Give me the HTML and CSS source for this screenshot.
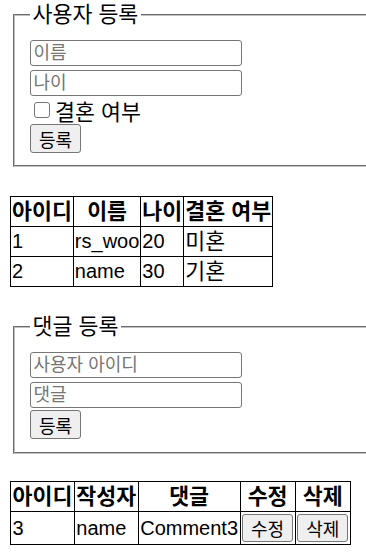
FILE: index.html
```html
<!DOCTYPE html>
<html lang="ko">
<head>
    <meta charset="UTF-8">
    <meta name="viewport" content="width=device-width, initial-scale=1.0">
    <title>시퀄라이즈 서버</title>
    <link rel="stylesheet" href="styles.css">
</head>
<body>
    <!-- 사용자 등록 -->
    <fieldset class="panel">
        <legend>사용자 등록</legend>
        <form id="user-form" class="panel-form">
            <input type="text" id="username" class="field" placeholder="이름">
            <input type="number" id="age" class="field" placeholder="나이">
            <label class="check-row"><input type="checkbox" id="married" class="check">결혼 여부</label>
            <button type="submit" class="btn">등록</button>
        </form>
    </fieldset>

    <table id="user-list" class="list">
        <thead>
            <tr>
                <th>아이디</th>
                <th>이름</th>
                <th>나이</th>
                <th>결혼 여부</th>
            </tr>
        </thead>
        <tbody>
            <tr>
                <td>1</td>
                <td>rs_woo</td>
                <td>20</td>
                <td class="married">미혼</td>
            </tr>
            <tr>
                <td>2</td>
                <td>name</td>
                <td>30</td>
                <td class="married">기혼</td>
            </tr>
        </tbody>
    </table>

    <!-- 댓글 등록 -->
    <fieldset class="panel comment-panel">
        <legend>댓글 등록</legend>
        <form id="comment-form" class="panel-form">
            <input type="text" id="userid" class="field" placeholder="사용자 아이디">
            <input type="text" id="comment" class="field" placeholder="댓글">
            <button type="submit" class="btn">등록</button>
        </form>
    </fieldset>

    <table id="comment-list" class="list comment-list">
        <thead>
            <tr>
                <th>아이디</th>
                <th>작성자</th>
                <th>댓글</th>
                <th>수정</th>
                <th>삭제</th>
            </tr>
        </thead>
        <tbody>
            <tr>
                <td>3</td>
                <td>name</td>
                <td>Comment3</td>
                <td><button type="button" class="btn">수정</button></td>
                <td><button type="button" class="btn">삭제</button></td>
            </tr>
        </tbody>
    </table>
</body>
</html>
```

FILE: styles.css
```css
/* Global Styles */
html {
    overflow-x: hidden;
}

body {
    font-family: "Liberation Sans", "Noto Sans CJK KR", sans-serif;
    font-size: 21.7px; /* hangul runs at ~20px per glyph */
    margin: 2px 0 10px 10px;
    color: #000;
    background-color: #fff;
}

/* Fieldsets */
.panel {
    margin: 0 0 0 3px;
    padding: 0 15px 12px;
    border: 2px groove #c0c0c0;
    border-right: none;
}

.panel legend {
    padding: 0 2.5px;
    line-height: 26px;
}

.panel-form {
    display: flex;
    flex-direction: column;
    align-items: flex-start;
    padding-top: 12px;
}

.field {
    box-sizing: border-box;
    width: 212px;
    height: 26px;
    margin: 0 0 4px;
    padding: 1px 2.5px;
    border: 1px solid #767676;
    border-radius: 3px;
    font-family: inherit;
    font-size: 18px;
    outline: none;
}

.field::placeholder {
    color: #757575;
}

.check-row {
    display: flex;
    align-items: center;
    height: 28px;
    margin-top: -4px;
}

.check {
    appearance: none;
    box-sizing: border-box;
    width: 16px;
    height: 16px;
    margin: 0 5px 0 4px;
    border: 1px solid #767676;
    border-radius: 3px;
    background-color: #fff;
}

.btn {
    box-sizing: border-box;
    height: 29px;
    padding: 0 8px;
    border: 1px solid #767676;
    border-radius: 3px;
    background-color: #efefef;
    color: #000;
    font-family: inherit;
    font-size: 18px;
}

.comment-panel {
    margin-top: 27px;
    padding-bottom: 13px;
}

.comment-panel .btn {
    margin-top: -2px;
}

/* Tables */
.list {
    border-collapse: collapse;
    margin-top: 29px;
}

.list th,
.list td {
    border: 1px solid #000;
    padding: 1px;
    line-height: 27px;
    white-space: nowrap;
}

.list td {
    font-size: 20px;
    text-align: left;
}

.list td.married {
    font-size: 21.7px;
}

.comment-list {
    margin-top: 27px;
}

.comment-list th,
.comment-list td {
    padding: 1px 1.5px;
}

.comment-list .btn {
    display: block;
    height: 28px;
    margin: 1px 0;
}
```
